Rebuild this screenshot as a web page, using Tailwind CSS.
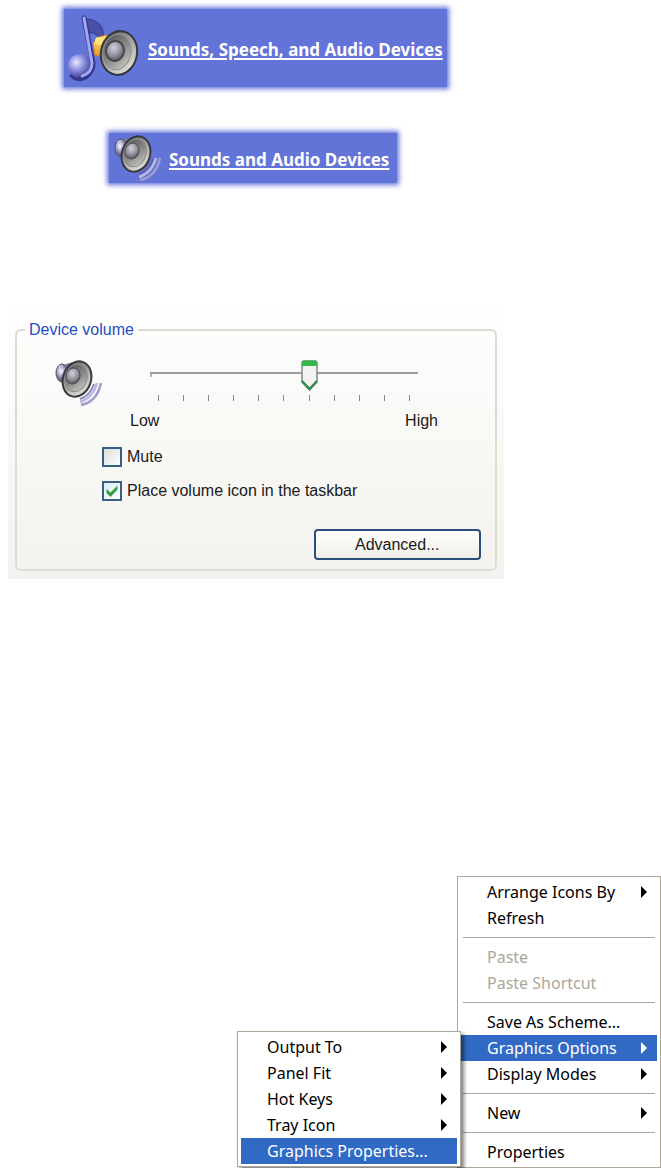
<!DOCTYPE html>
<html lang="en">
<head>
    <meta charset="UTF-8">
    <meta name="viewport" content="width=device-width, initial-scale=1.0">
    <title>Sounds and Audio Devices</title>
    <script src="https://cdn.jsdelivr.net/npm/@tailwindcss/browser@4"></script>

    <style>
        /* Slider */
        .volume {
            appearance: none;
            background: linear-gradient(#9c9c9c, #9c9c9c) 0 13px / 100% 2px no-repeat,
                        linear-gradient(#b4b4b0, #b4b4b0) 0 13px / 2px 5px no-repeat;
        }
        .volume::-webkit-slider-thumb {
            appearance: none;
            width: 17px;
            height: 31px;
            background: url("data:image/svg+xml,%3Csvg xmlns='http://www.w3.org/2000/svg' width='17' height='31'%3E%3Cpath d='M1 3Q1 1 3 1H14Q16 1 16 3V22L8.500 30L1 22Z' fill='%23f4f2f2' stroke='%237d8a86' stroke-width='1.500'/%3E%3Cpath d='M1 6V3Q1 .5 3 .5H14Q16 .5 16 3V6Z' fill='%2335b848'/%3E%3Cpath d='M1 21L8.500 29L16 21' fill='none' stroke='%23358a55' stroke-width='2.500'/%3E%3C/svg%3E") no-repeat;
        }
        /* Check boxes */
        .check {
            appearance: none;
            background: linear-gradient(135deg, #dcdcd8, #ffffff);
        }
        .check:checked {
            background: url("data:image/svg+xml,%3Csvg xmlns='http://www.w3.org/2000/svg' viewBox='0 0 16 16'%3E%3Cpath d='M2.500 6L6.500 9.500L13.500 2.500V6.500L6.500 14L2.500 10Z' fill='%232f9e3a'/%3E%3C/svg%3E") center / 16px no-repeat, linear-gradient(135deg, #dceaf4, #ffffff);
        }
    </style>
</head>
<body class="bg-white">

    <!-- Shared speaker drawing -->
    <svg class="absolute size-0" aria-hidden="true">
        <defs>
            <linearGradient id="rim" x1="0" y1="0" x2="1" y2="1">
                <stop offset="0" stop-color="#55575a"/>
                <stop offset=".5" stop-color="#a9aaa8"/>
                <stop offset="1" stop-color="#f4f4ec"/>
            </linearGradient>
            <linearGradient id="bowl" x1="0" y1="0" x2="1" y2="1">
                <stop offset="0" stop-color="#4d4e50"/>
                <stop offset=".55" stop-color="#8e8f8d"/>
                <stop offset="1" stop-color="#d6d7cf"/>
            </linearGradient>
            <radialGradient id="dome" cx=".4" cy=".35" r=".7">
                <stop offset="0" stop-color="#d2d3de"/>
                <stop offset=".6" stop-color="#8c8d97"/>
                <stop offset="1" stop-color="#4c4d55"/>
            </radialGradient>
            <radialGradient id="magnet" cx=".4" cy=".35" r=".7">
                <stop offset="0" stop-color="#ffffff"/>
                <stop offset=".5" stop-color="#a9a9cf"/>
                <stop offset="1" stop-color="#45456c"/>
            </radialGradient>
            <radialGradient id="note" cx=".35" cy=".35" r=".7">
                <stop offset="0" stop-color="#e6e8ff"/>
                <stop offset=".45" stop-color="#8f92e2"/>
                <stop offset="1" stop-color="#35388f"/>
            </radialGradient>
            <linearGradient id="gold" x1="0" y1="0" x2="0" y2="1">
                <stop offset="0" stop-color="#ffe98a"/>
                <stop offset="1" stop-color="#ee9412"/>
            </linearGradient>
        </defs>
        <symbol id="speaker" viewBox="0 0 48 48">
            <path d="M40 25Q36 37 26 40" fill="none" stroke="#5f5e92" stroke-width="2" opacity=".7"/>
            <path d="M43 24Q39 39 26 43" fill="none" stroke="#b9b7e6" stroke-width="2.500"/>
            <path d="M47 24Q43 43 27 46" fill="none" stroke="#9f9dcc" stroke-width="2.500"/>
            <ellipse cx="8" cy="14" rx="6" ry="9" fill="url(#magnet)" stroke="#4a4a66"/>
            <path d="M9 6L19 3L16 33L9 23Z" fill="#77788c"/>
            <ellipse cx="8" cy="14" rx="5" ry="7" fill="url(#magnet)"/>
            <ellipse cx="23" cy="20" rx="14" ry="18" transform="rotate(18 23 20)" fill="url(#rim)" stroke="#37393b" stroke-width="2"/>
            <ellipse cx="22" cy="19" rx="11" ry="14" transform="rotate(18 22 19)" fill="url(#bowl)" stroke="#8b8c8a" stroke-width="1"/>
            <ellipse cx="19" cy="17" rx="7" ry="8" transform="rotate(18 19 17)" fill="url(#dome)" stroke="#4b4c50" stroke-width="1"/>
        </symbol>
    </svg>

    <main class="flex flex-col items-start">

        <!-- Category links -->
        <div class="mt-[9px] ml-16 flex h-[78px] items-center bg-[#6274d8] pr-1 pl-0.5 shadow-[0_0_5px_2px_#6274d8]">
            <svg class="h-[70px] w-[74px] shrink-0" viewBox="0 0 74 70" aria-hidden="true">
                <path d="M20 6Q30 6 35 13Q39 19 36 30Q31 18 23 20Z" fill="#4a4fa8" stroke="#343a88" stroke-width="1"/>
                <path d="M27 30L33 24L41 22V44L29 42Z" fill="url(#gold)" stroke="#d98c1c"/>
                <circle cx="33" cy="28" r="4" fill="#ffe37a"/>
                <path d="M28 50Q28 65 16 68Q7 69 3 62L20 58Z" fill="#34388c"/>
                <ellipse cx="14" cy="53" rx="12" ry="12" fill="url(#note)"/>
                <path d="M18 5L27 50Q27 61 16 64" fill="none" stroke="#34388c" stroke-width="5" stroke-linecap="round"/>
                <path d="M18 5L26 50Q26 60 16 63" fill="none" stroke="#a3a6f2" stroke-width="3" stroke-linecap="round"/>
                <ellipse cx="53" cy="40" rx="18" ry="22" transform="rotate(12 53 40)" fill="url(#rim)" stroke="#36383c" stroke-width="2"/>
                <ellipse cx="51" cy="39" rx="14" ry="18" transform="rotate(12 51 39)" fill="url(#bowl)" stroke="#92938f" stroke-width="1"/>
                <ellipse cx="49" cy="38" rx="9" ry="10" transform="rotate(12 49 38)" fill="url(#dome)" stroke="#47484a" stroke-width="2"/>
            </svg>
            <a href="#" class="mt-1 ml-2 font-['Noto_Sans',sans-serif] text-[17px] leading-6 font-bold whitespace-nowrap text-white underline decoration-2 underline-offset-2">Sounds, Speech, and Audio Devices</a>
        </div>

        <div class="mt-[46px] ml-[109px] flex h-[50px] items-center bg-[#6274d8] pr-2 pl-1 shadow-[0_0_5px_2px_#6274d8]">
            <svg class="size-12 shrink-0" aria-hidden="true"><use href="#speaker"/></svg>
            <a href="#" class="mt-1 ml-2 font-['Noto_Sans',sans-serif] text-[17px] leading-6 font-bold whitespace-nowrap text-white underline decoration-2 underline-offset-2">Sounds and Audio Devices</a>
        </div>

        <!-- Device volume -->
        <section class="mt-[126px] ml-2 w-3/4 min-w-[495px] bg-linear-to-b from-[#fefefe] via-[#f8f8f5] to-[#f4f2ee] px-[7px] pt-[9px] pb-2 font-['Liberation_Sans',sans-serif] text-[16px] leading-6 text-[#1a1a1a]">
            <fieldset class="rounded-md border-2 border-[#dcdcd4]">
                <legend class="ml-2 px-1 text-[#1d4fc0]">Device volume</legend>
                <div class="mt-[17px] ml-[37px] flex gap-7">
                    <svg class="size-12 shrink-0" aria-hidden="true"><use href="#speaker"/></svg>
                    <div class="w-[308px]">
                        <div class="px-5">
                            <input type="range" min="0" max="10" value="6" aria-label="Device volume" class="volume block h-8 w-full">
                            <div class="mt-1 flex justify-between px-2">
                                <span class="h-1.5 w-px bg-[#8a8a8a]"></span>
                                <span class="h-1.5 w-px bg-[#8a8a8a]"></span>
                                <span class="h-1.5 w-px bg-[#8a8a8a]"></span>
                                <span class="h-1.5 w-px bg-[#8a8a8a]"></span>
                                <span class="h-1.5 w-px bg-[#8a8a8a]"></span>
                                <span class="h-1.5 w-px bg-[#8a8a8a]"></span>
                                <span class="h-1.5 w-px bg-[#8a8a8a]"></span>
                                <span class="h-1.5 w-px bg-[#8a8a8a]"></span>
                                <span class="h-1.5 w-px bg-[#8a8a8a]"></span>
                                <span class="h-1.5 w-px bg-[#8a8a8a]"></span>
                                <span class="h-1.5 w-px bg-[#8a8a8a]"></span>
                            </div>
                        </div>
                        <div class="mt-2 flex justify-between">
                            <span>Low</span>
                            <span>High</span>
                        </div>
                    </div>
                </div>
                <div class="mt-3 ml-[85px] flex flex-col items-start gap-[10px]">
                    <label class="flex items-center gap-[5px]"><input type="checkbox" class="check size-5 border-2 border-[#3a5f86]"> Mute</label>
                    <label class="flex items-center gap-[5px]"><input type="checkbox" checked class="check size-5 border-2 border-[#3a5f86]"> Place volume icon in the taskbar</label>
                </div>
                <div class="mt-[26px] mr-[14px] mb-[9px] flex justify-end">
                    <button type="button" class="h-[31px] w-[167px] rounded-sm border-2 border-[#2b4f78] bg-linear-to-b from-white to-[#efeee8]">Advanced...</button>
                </div>
            </fieldset>
        </section>

        <!-- Desktop menu -->
        <ul class="mt-[297px] w-[204px] self-end border border-[#aca899] bg-white px-[3px] py-[2px] font-['Noto_Sans',sans-serif] text-[16px] leading-[26px] whitespace-nowrap text-black">
            <li><button type="button" class="flex w-full items-center justify-between pr-2.5 pl-[26px]">Arrange Icons By <svg class="h-3 w-1.5" viewBox="0 0 6 12"><path d="M0 0L6 6L0 12Z" fill="currentColor"/></svg></button></li>
            <li><button type="button" class="flex w-full items-center pl-[26px]">Refresh</button></li>
            <li class="mx-0.5 my-1.5 h-px bg-[#aca899]"></li>
            <li><button type="button" disabled class="flex w-full items-center pl-[26px] text-[#aca899]">Paste</button></li>
            <li><button type="button" disabled class="flex w-full items-center pl-[26px] text-[#aca899]">Paste Shortcut</button></li>
            <li class="mx-0.5 my-1.5 h-px bg-[#aca899]"></li>
            <li><button type="button" class="flex w-full items-center pl-[26px]">Save As Scheme...</button></li>
            <li class="relative">
                <button type="button" class="flex w-full items-center justify-between bg-[#316ac5] pr-2.5 pl-[26px] text-white">Graphics Options <svg class="h-3 w-1.5" viewBox="0 0 6 12"><path d="M0 0L6 6L0 12Z" fill="currentColor"/></svg></button>
                <!-- Submenu -->
                <ul class="absolute -top-1 right-full w-56 border border-[#aca899] bg-white px-[3px] py-[2px] text-black shadow-[3px_3px_4px_rgba(0,0,0,0.5)]">
                    <li><button type="button" class="flex w-full items-center justify-between pr-2.5 pl-[26px]">Output To <svg class="h-3 w-1.5" viewBox="0 0 6 12"><path d="M0 0L6 6L0 12Z" fill="currentColor"/></svg></button></li>
                    <li><button type="button" class="flex w-full items-center justify-between pr-2.5 pl-[26px]">Panel Fit <svg class="h-3 w-1.5" viewBox="0 0 6 12"><path d="M0 0L6 6L0 12Z" fill="currentColor"/></svg></button></li>
                    <li><button type="button" class="flex w-full items-center justify-between pr-2.5 pl-[26px]">Hot Keys <svg class="h-3 w-1.5" viewBox="0 0 6 12"><path d="M0 0L6 6L0 12Z" fill="currentColor"/></svg></button></li>
                    <li><button type="button" class="flex w-full items-center justify-between pr-2.5 pl-[26px]">Tray Icon <svg class="h-3 w-1.5" viewBox="0 0 6 12"><path d="M0 0L6 6L0 12Z" fill="currentColor"/></svg></button></li>
                    <li><button type="button" class="flex w-full items-center bg-[#316ac5] pl-[26px] text-white">Graphics Properties...</button></li>
                </ul>
            </li>
            <li><button type="button" class="flex w-full items-center justify-between pr-2.5 pl-[26px]">Display Modes <svg class="h-3 w-1.5" viewBox="0 0 6 12"><path d="M0 0L6 6L0 12Z" fill="currentColor"/></svg></button></li>
            <li class="mx-0.5 my-1.5 h-px bg-[#aca899]"></li>
            <li><button type="button" class="flex w-full items-center justify-between pr-2.5 pl-[26px]">New <svg class="h-3 w-1.5" viewBox="0 0 6 12"><path d="M0 0L6 6L0 12Z" fill="currentColor"/></svg></button></li>
            <li class="mx-0.5 my-1.5 h-px bg-[#aca899]"></li>
            <li><button type="button" class="flex w-full items-center pl-[26px]">Properties</button></li>
        </ul>
    </main>
</body>
</html>
